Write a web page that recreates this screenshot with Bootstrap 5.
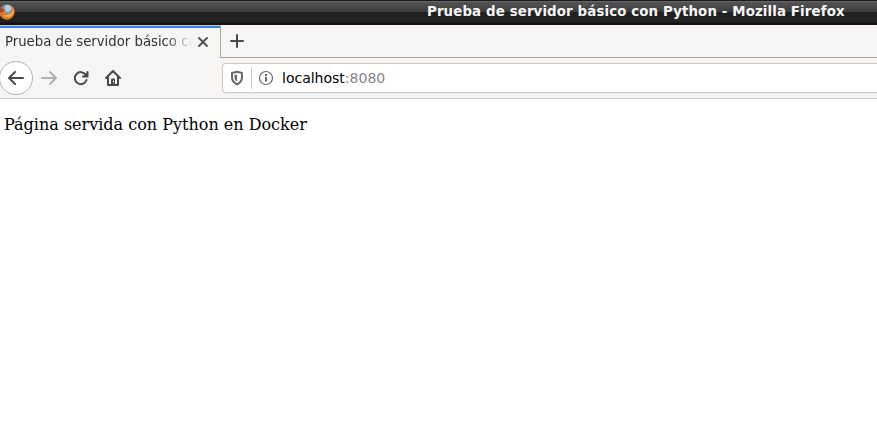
<!DOCTYPE html>
<html lang="es">
<head>
<meta charset="utf-8">
<title>Prueba de servidor básico con Python</title>
<link href="https://cdn.jsdelivr.net/npm/bootstrap@5.3.0/dist/css/bootstrap.min.css" rel="stylesheet">
<style>
body{height:427px;font-family:"DejaVu Sans",sans-serif;color:#2e3436}
svg{display:block;flex:none}
.titlebar{height:25px;background:linear-gradient(#1a1718 0 1px,#656565 1px 2px,#545454 2px,#3c3c3c 12px,#202020 12px,#232323 22px,#151113 23px,#151113 25px)}
.window-title{font-size:13.33px;letter-spacing:.137px;font-weight:700;line-height:23px;margin-left:412px;color:#f7f7f7}
.tabstrip{height:33px;background:#f6f5f4}
.tab{width:221px;border-top:1px solid #c9c4c0;border-right:1px solid #aaa8a5;padding-left:5px;background:#f6f5f4}
.tab::before{content:"";position:absolute;left:0;top:0;width:220px;height:2px;background:#3584e4}
.tab-label{width:187px;font-size:13.26px;line-height:30px;-webkit-mask-image:linear-gradient(90deg,#000 160px,transparent 188px);mask-image:linear-gradient(90deg,#000 160px,transparent 188px)}
.strip-rest{border-bottom:1px solid #aaa8a5;padding-left:8px}
.toolbar{height:41px;background:#f6f5f4;border-bottom:1px solid #ccc7c1}
.back{width:34px;height:34px;border:1px solid #b4b2af;background:#fff;margin-left:-1px}
.address{height:30px;margin-left:101px;border:1px solid #cdc7c2;border-right:0;border-radius:4px 0 0 4px;padding-left:6px;font-size:14px;box-shadow:0 1px 2px #0000000a}
.divider{width:1px;height:22px;background:#ccc;margin:0 6px 0 7px}
.url{margin-left:8px}
.port{color:#858585}
.page{font-family:"DejaVu Serif",serif;font-size:16px;line-height:19px;padding:16px 4px;color:#000}
</style>
<script src="https://cdn.jsdelivr.net/npm/bootstrap@5.3.0/dist/js/bootstrap.bundle.min.js"></script>
</head>
<body class="bg-white overflow-hidden d-flex flex-column">
<header class="titlebar d-flex text-nowrap">
<svg width="15" height="25" viewBox="0 0 15 25"><circle cx="7" cy="12.200" r="7.600" fill="#d96b20"/><circle cx="7" cy="9.500" r="5" fill="#6b9ccc"/><path d="M5 6l3-1 3 1v4l-3 2-3-1z" fill="#b5cde2"/><path d="M0 7l2 1.500 3 1.500 1 2-2 1c2 3 6 2 7-1l1-6c4 4 3 9-1 12C7 21 0 18-.5 12z" fill="#e07a22"/><path d="M12.500 7c2 4 1 7-1.500 9-3 2-7 1-8-1 4 1 8 0 9.500-4z" fill="#f6bd55"/><path d="M0 7l3 2 2 1-2 1-1 2-2-1z" fill="#a54222"/></svg>
<div class="window-title">Prueba de servidor básico con Python - Mozilla Firefox</div>
</header>
<nav class="tabstrip d-flex">
<div class="tab position-relative d-flex align-items-center flex-shrink-0">
<div class="tab-label overflow-hidden text-nowrap">Prueba de servidor básico co</div>
<svg width="22" height="30" viewBox="192 27 22 30" fill="none" stroke="#4a4f51" stroke-width="1.800" stroke-linecap="round"><path d="M199 38l8 8m0-8l-8 8"/></svg>
</div>
<div class="strip-rest flex-grow-1"><svg width="16" height="32" viewBox="0 0 16 32" stroke="#464b4d" stroke-width="2" stroke-linecap="round"><path d="M2 16h12M8 10v12"/></svg></div>
</nav>
<div class="toolbar d-flex align-items-center">
<div class="back rounded-circle d-flex align-items-center justify-content-center flex-shrink-0"><svg width="16" height="16" viewBox="0 0 16 16" fill="none" stroke="#464b4d" stroke-width="2" stroke-linecap="round" stroke-linejoin="round"><path d="M15 8H1.500M7 2L1 8l6 6"/></svg></div>
<svg class="ms-2" width="16" height="16" viewBox="0 0 16 16" fill="none" stroke="#b2b2b1" stroke-width="2" stroke-linecap="round" stroke-linejoin="round"><path d="M1 8h13.500M9 2l6 6-6 6"/></svg>
<svg class="ms-3" width="16" height="16" viewBox="0 0 16 16" fill="none" stroke="#464b4d" stroke-width="2" stroke-linecap="round"><path d="M12.800 4.800A6 6 0 1 0 13.500 10"/><path d="M15 1.500V7H9.500z" fill="#464b4d" stroke="none"/><path d="M14.500 2v4.500H10"/></svg>
<svg class="ms-3" width="16" height="16" viewBox="0 0 16 16" fill="none" stroke="#464b4d" stroke-width="2" stroke-linecap="round" stroke-linejoin="round"><path d="M1 8l7-7 7 7M3 7v8h10V7"/><path d="M6 15V9.500q0-1 1-1h2q1 0 1 1V15z" fill="#464b4d" stroke="none"/><path d="M8.500 11v1" stroke="#fff" stroke-width="1"/></svg>
<div class="address bg-white flex-grow-1 d-flex align-items-center">
<svg width="15" height="16" viewBox="0 0 15 16"><path d="M8 1.800L13 3v4c0 3.500-2 6-5 7.500C5 13 3 10.500 3 7V3z" fill="none" stroke="#6a6a6a" stroke-width="2" stroke-linejoin="round"/><path d="M8 4.500v7C6 10.500 5.500 9 5.500 7V5z" fill="#6a6a6a"/></svg>
<div class="divider"></div>
<svg width="16" height="16" viewBox="0 0 16 16"><circle cx="8" cy="8" r="6.500" fill="none" stroke="#6a6a6a" stroke-width="1.200"/><path d="M8 7v4.500M8 4v1.900" stroke="#6a6a6a" stroke-width="2"/></svg>
<div class="url text-black">localhost<span class="port">:8080</span></div>
</div>
</div>
<main class="page flex-grow-1">Página servida con Python en Docker</main>
</body>
</html>
